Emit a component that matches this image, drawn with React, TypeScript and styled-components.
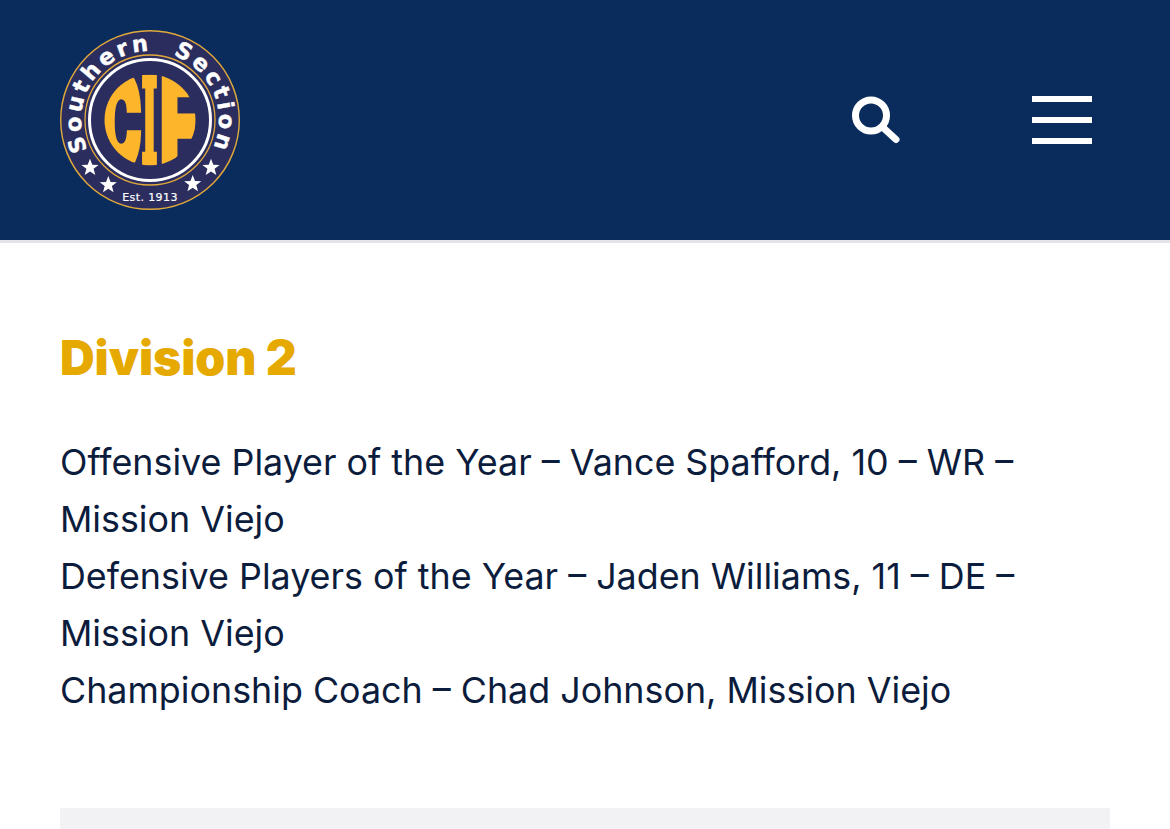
import React from "react";
import styled, { createGlobalStyle } from "styled-components";

const Global = createGlobalStyle`
  html, body { margin: 0; padding: 0; background: #fff; overflow: hidden; }
  body { font-family: Inter, "Liberation Sans", sans-serif; }
`;

const Page = styled.div`
  width: 1170px;
  height: 829px;
  overflow: hidden;
  display: flex;
  flex-direction: column;
`;

const Header = styled.header`
  height: 240px;
  flex: none;
  background: #0a2c5c;
  border-bottom: 3px solid #e3e5e9;
  padding: 0 78px 0 60px;
  display: flex;
  align-items: center;
  justify-content: space-between;
`;

const Actions = styled.div`
  display: flex;
  align-items: center;
  gap: 132px;
`;

const IconButton = styled.button`
  border: 0;
  padding: 0;
  background: none;
  display: block;
  line-height: 0;
`;

const Burger = styled.div`
  width: 60px;
  display: flex;
  flex-direction: column;
  gap: 15px;
`;

const BurgerBar = styled.span`
  display: block;
  height: 6px;
  background: #fff;
`;

const Main = styled.main`
  padding: 87px 60px 0;
  flex: 1;
`;

const Heading = styled.h2`
  margin: 0;
  font-family: Inter, sans-serif;
  font-weight: 900;
  font-size: 48px;
  line-height: 56px;
  letter-spacing: -0.1px;
  color: #e5a900;
`;

const Body = styled.p`
  margin: 48px 0 0;
  font-family: Inter, sans-serif;
  font-weight: 400;
  font-size: 35.85px;
  line-height: 57px;
  color: #0c1c3c;
`;

const Panel = styled.div`
  margin-top: 89px;
  height: 60px;
  background: #f2f2f5;
`;

const STAR = "M0,-9 L2.3,-2.9 L8.6,-2.8 L3.6,1.1 L5.3,7.3 L0,3.7 L-5.3,7.3 L-3.6,1.1 L-8.6,-2.8 L-2.3,-2.9 Z";

const Logo = () => (
  <svg width="180" height="180" viewBox="0 0 180 180" aria-label="CIF Southern Section">
    <defs>
      <path id="logo-arc" d="M 55.5 149.8 A 69 69 0 1 1 124.5 149.8" fill="none" />
      <clipPath id="logo-mono">
        <circle cx="90" cy="90" r="45.5" />
      </clipPath>
    </defs>
    <circle cx="90" cy="90" r="89.3" fill="#2b2d5e" stroke="#e2a93b" strokeWidth="1.4" />
    <circle cx="90" cy="90" r="65" fill="none" stroke="#e2a93b" strokeWidth="1.3" />
    <circle cx="90" cy="90" r="60.5" fill="none" stroke="#fff" strokeWidth="3" />
    <text
      fill="#fff"
      stroke="#fff"
      strokeWidth="0.4"
      fontFamily="'DejaVu Sans', sans-serif"
      fontWeight="700"
      fontSize="22.5"
      letterSpacing="3"
      textAnchor="middle"
    >
      <textPath href="#logo-arc" startOffset="50%">
        {"Southern\u00A0\u00A0Section"}
      </textPath>
    </text>
    <g fill="#fff">
      <path d={STAR} transform="translate(30 137.7)" />
      <path d={STAR} transform="translate(48.3 155)" />
      <path d={STAR} transform="translate(132.7 154)" />
      <path d={STAR} transform="translate(151 137.7)" />
    </g>
    <text
      x="90"
      y="171"
      fill="#fff"
      stroke="#fff"
      strokeWidth="0.2"
      fontFamily="'DejaVu Sans', sans-serif"
      fontSize="11"
      letterSpacing="0.4"
      textAnchor="middle"
    >
      Est. 1913
    </text>
    <g clipPath="url(#logo-mono)" fill="#fdb52b" stroke="#fdb52b" fontFamily="Inter, sans-serif" fontWeight="900" fontSize="100">
      <text transform="translate(40 139) scale(0.55 1.3)" strokeWidth="6">C</text>
      <text transform="translate(81.5 131.5) scale(0.34 1.15)" strokeWidth="6" fontFamily="'DejaVu Serif', serif">I</text>
      <text transform="translate(100 139) scale(0.66 1.3)" strokeWidth="4">F</text>
    </g>
  </svg>
);

const SearchIcon = () => (
  <svg width="50" height="50" viewBox="0 0 50 50" fill="none" stroke="#fff" strokeLinecap="round" aria-hidden="true">
    <circle cx="21" cy="20.5" r="15.5" strokeWidth="7" />
    <path d="M33 32.5 L46 44.5" strokeWidth="7" />
  </svg>
);

export default function App() {
  return (
    <Page>
      <Global />
      <Header>
        <Logo />
        <Actions>
          <IconButton aria-label="Search">
            <SearchIcon />
          </IconButton>
          <Burger aria-label="Menu">
            <BurgerBar />
            <BurgerBar />
            <BurgerBar />
          </Burger>
        </Actions>
      </Header>
      <Main>
        <Heading>Division 2</Heading>
        <Body>
          Offensive Player of the Year – Vance Spafford, 10 – WR – Mission Viejo
          <br />
          Defensive Players of the Year – Jaden Williams, 11 – DE – Mission Viejo
          <br />
          Championship Coach – Chad Johnson, Mission Viejo
        </Body>
        <Panel />
      </Main>
    </Page>
  );
}
